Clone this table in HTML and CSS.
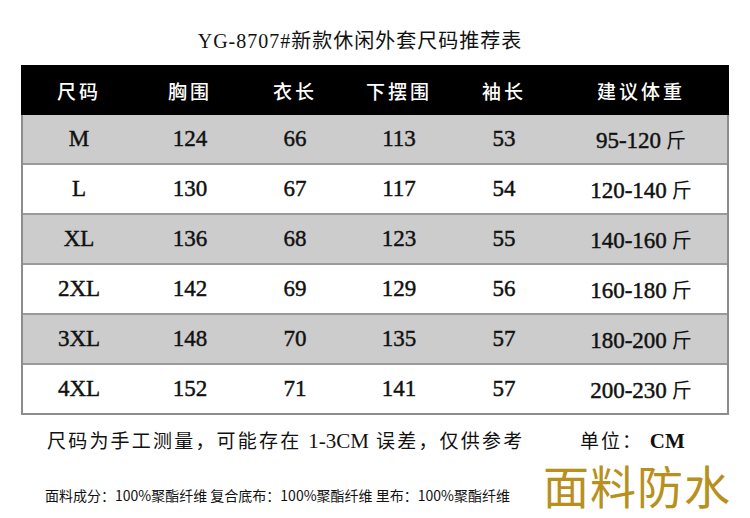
FILE: index.html
```html
<!DOCTYPE html>
<html lang="zh">
<head>
<meta charset="utf-8">
<link rel="stylesheet" href="styles.css">
</head>
<body>
<div class="page">
  <h1 class="title">YG-8707#新款休闲外套尺码推荐表</h1>
  <div class="table">
    <div class="row head">
      <div class="c c1">尺码</div><div class="c c2">胸围</div><div class="c c3">衣长</div><div class="c c4">下摆围</div><div class="c c5">袖长</div><div class="c c6">建议体重</div>
    </div>
    <div class="row gray">
      <div class="c c1">M</div><div class="c c2">124</div><div class="c c3">66</div><div class="c c4">113</div><div class="c c5">53</div><div class="c c6">95-120<span class="jin">斤</span></div>
    </div>
    <div class="row">
      <div class="c c1">L</div><div class="c c2">130</div><div class="c c3">67</div><div class="c c4">117</div><div class="c c5">54</div><div class="c c6">120-140<span class="jin">斤</span></div>
    </div>
    <div class="row gray">
      <div class="c c1">XL</div><div class="c c2">136</div><div class="c c3">68</div><div class="c c4">123</div><div class="c c5">55</div><div class="c c6">140-160<span class="jin">斤</span></div>
    </div>
    <div class="row">
      <div class="c c1">2XL</div><div class="c c2">142</div><div class="c c3">69</div><div class="c c4">129</div><div class="c c5">56</div><div class="c c6">160-180<span class="jin">斤</span></div>
    </div>
    <div class="row gray">
      <div class="c c1">3XL</div><div class="c c2">148</div><div class="c c3">70</div><div class="c c4">135</div><div class="c c5">57</div><div class="c c6">180-200<span class="jin">斤</span></div>
    </div>
    <div class="row">
      <div class="c c1">4XL</div><div class="c c2">152</div><div class="c c3">71</div><div class="c c4">141</div><div class="c c5">57</div><div class="c c6">200-230<span class="jin">斤</span></div>
    </div>
  </div>
  <div class="note">
    <span class="note-text">尺码为手工测量，可能存在 <span class="lat">1-3CM</span> 误差，仅供参考</span>
    <span class="unit">单位： <span class="lat cm">CM</span></span>
  </div>
  <div class="footer">
    <span class="fabric">面料成分：100%聚酯纤维 复合底布：100%聚酯纤维 里布：100%聚酯纤维</span>
    <span class="waterproof">面料防水</span>
  </div>
</div>
</body>
</html>
```
FILE: styles.css
```css
html, body {
  margin: 0;
  padding: 0;
  background: #ffffff;
}
.page {
  width: 750px;
  font-family: "Liberation Serif", "Noto Sans CJK SC", serif;
  color: #111;
}
.title {
  margin: 0;
  height: 65px;
  box-sizing: border-box;
  padding: 29px 30px 0 0;
  text-align: center;
  font-size: 20px;
  font-weight: normal;
  line-height: 24px;
  letter-spacing: 1px;
}
.table {
  margin-left: 21px;
  width: 708px;
  box-sizing: border-box;
  border-left: 2px solid #8c8c8c;
  border-right: 2px solid #8c8c8c;
  border-bottom: 2px solid #8c8c8c;
}
.row {
  display: flex;
  height: 50px;
  box-sizing: border-box;
  border-bottom: 2px solid #9a9a9a;
  align-items: center;
  font-size: 23px;
  -webkit-text-stroke: 0.45px #111;
}
.row:last-child {
  border-bottom: none;
  height: 48px;
}
.row.head {
  background: #000;
  color: #fff;
  -webkit-text-stroke: 0;
  border-bottom: none;
  margin: 0 -2px;
  padding: 0 2px;
  font-weight: 500;
  font-size: 19px;
  letter-spacing: 3px;
}
.row.gray {
  background: #cccccc;
}
.c {
  text-align: center;
  flex: none;
}
.c1 { width: 112px; }
.c2 { width: 110px; }
.c3 { width: 100px; }
.c4 { width: 108px; }
.c5 { width: 102px; }
.c6 { width: 172px; }
.jin {
  font-size: 20px;
  -webkit-text-stroke: 0;
  margin-left: 5px;
}
.note {
  display: flex;
  align-items: center;
  height: 50px;
  padding-left: 47px;
  font-size: 19px;
  letter-spacing: 2.2px;
}
.note-text {
  width: 533px;
}
.lat {
  font-size: 21px;
  letter-spacing: 0;
}
.cm {
  font-weight: bold;
}
.unit {
  letter-spacing: 2px;
}
.footer {
  display: flex;
  align-items: flex-start;
  padding-left: 45px;
  height: 53px;
}
.fabric {
  font-family: "Noto Sans CJK SC", "Liberation Sans", sans-serif;
  font-size: 14px;
  line-height: 20px;
  color: #111;
  width: 498px;
  margin-top: 20px;
}
.waterproof {
  font-family: "Noto Sans CJK SC", sans-serif;
  font-size: 46px;
  color: #b8901d;
  letter-spacing: 1px;
  line-height: 46px;
  margin-top: -4px;
}
```
